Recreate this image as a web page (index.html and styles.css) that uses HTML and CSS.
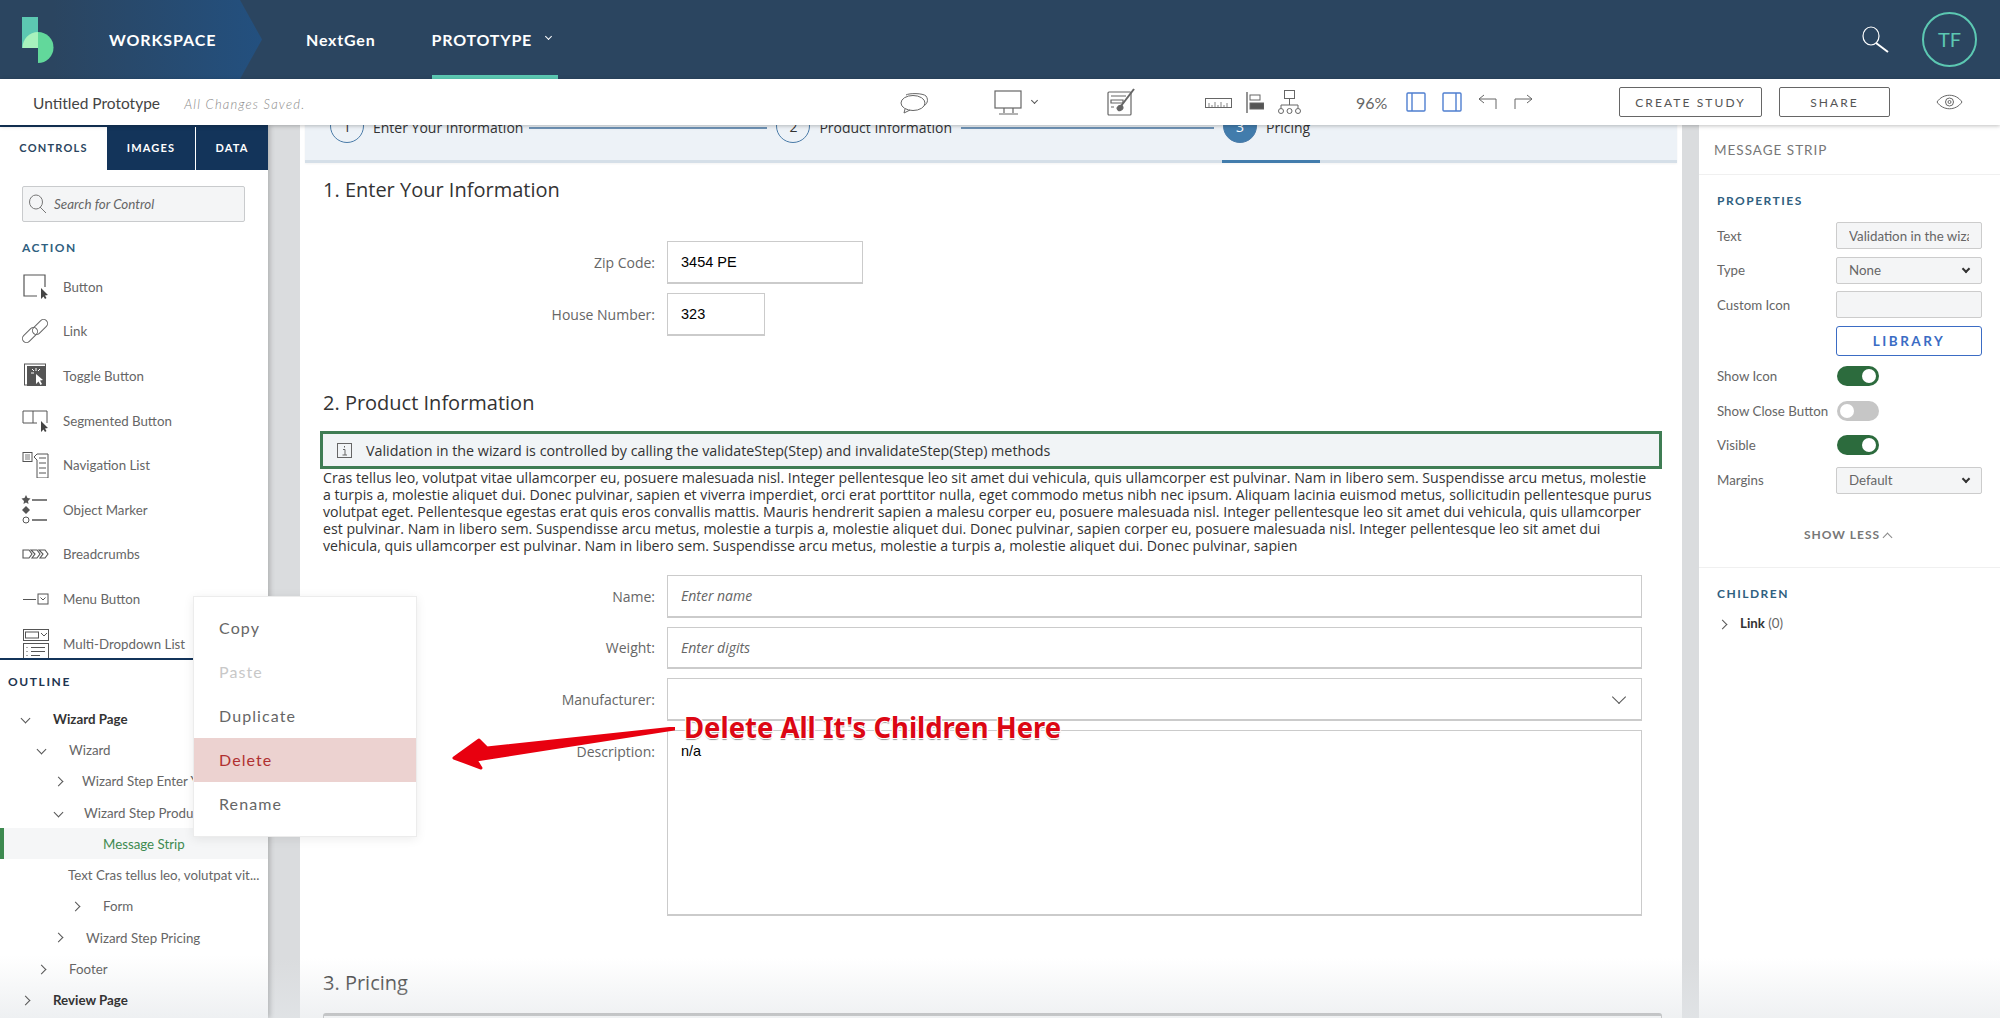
FILE: index.html
```html
<!DOCTYPE html>
<html lang="en">
<head>
    <meta charset="UTF-8">
    <meta name="viewport" content="width=device-width, initial-scale=1.0">
    <title>Untitled Prototype</title>
    <link rel="stylesheet" href="styles.css">
</head>
<body>
    <header class="topbar">
        <div class="brand">
            <svg class="logo" width="32" height="46" viewBox="0 0 32 46">
                <rect x="0" y="0" width="16" height="31" fill="#5cc8b2"/>
                <path d="M16 15 A15.5 15.5 0 0 1 16 46 Z" fill="#62d89b"/>
                <path d="M16 15 A15.5 15.5 0 0 0 0.500 31 H16 Z" fill="#a8f2bd"/>
            </svg>
            <span class="brand-name">WORKSPACE</span>
        </div>
        <nav class="topnav">
            <a class="topnav-link">NextGen</a>
            <a class="topnav-link active">PROTOTYPE <i class="chev chev-down light"></i></a>
        </nav>
        <div class="top-right">
            <svg width="27" height="27" viewBox="0 0 27 27" fill="none" stroke="#fff">
                <ellipse cx="9" cy="10" rx="8" ry="9" stroke-width="1.2"/>
                <path d="M14 17 L26 26" stroke-width="2"/>
            </svg>
            <div class="avatar">TF</div>
        </div>
    </header>

    <div class="toolbar">
        <div class="doc">
            <span class="doc-title">Untitled Prototype</span>
            <span class="doc-status">All Changes Saved.</span>
        </div>
        <svg class="tool tool-comment" width="28" height="21" viewBox="0 0 28 21" fill="none" stroke="#666">
            <path d="M6 2 C9 0 23 0 26 3 C29 7 27 12 23 13"/>
            <ellipse cx="13" cy="10" rx="12" ry="7.5" fill="#fff"/>
            <path d="M5 16 L4 20 L10 17"/>
        </svg>
        <svg class="tool" width="29" height="25" viewBox="0 0 29 25" fill="none" stroke="#666" stroke-width="1.2">
            <rect x="1" y="1" width="26" height="17"/>
            <path d="M10 18 V23 M19 18 V23 M5 24 H24"/>
        </svg>
        <i class="chev chev-down small tool-monitor-chev"></i>
        <svg class="tool tool-brush" width="28" height="28" viewBox="0 0 28 28" fill="none" stroke="#666" stroke-width="1.2">
            <rect x="1" y="4" width="23" height="23" rx="1"/>
            <path d="M4 8 H19 M4 12 H16 V15 H4 Z M4 19 H7"/>
            <path d="M27 1 L14 18" stroke-width="2"/>
            <path d="M10 20 C12 16 16 17 16 20 C15 23 11 24 10 20 Z" fill="#666"/>
        </svg>
        <svg class="tool tool-ruler" width="27" height="10" viewBox="0 0 27 10" fill="none" stroke="#666">
            <rect x="0.5" y="0.5" width="26" height="9"/>
            <path d="M4 9 V5 M7 9 V7 M10 9 V4 M13 9 V7 M16 9 V4 M19 9 V7 M22 9 V5" stroke-width="0.8"/>
        </svg>
        <svg class="tool tool-align" width="18" height="21" viewBox="0 0 18 21" fill="none" stroke="#666">
            <path d="M1 0 V21" stroke-width="1.4"/>
            <rect x="4" y="3" width="10" height="5"/>
            <rect x="4" y="11" width="14" height="6" fill="#555"/>
        </svg>
        <svg class="tool tool-tree" width="23" height="24" viewBox="0 0 23 24" fill="none" stroke="#666">
            <rect x="6.5" y="0.5" width="10" height="8"/>
            <path d="M11.5 9 V15 M3 18 V15 H20 V18"/>
            <circle cx="3" cy="21" r="2.5"/><circle cx="11.5" cy="21" r="2.5"/><circle cx="20" cy="21" r="2.5"/>
        </svg>
        <span class="zoom-level">96%</span>
        <svg class="tool tool-panel" width="20" height="20" viewBox="0 0 20 20" fill="none" stroke="#4f7fd0" stroke-width="1.4">
            <rect x="1" y="1" width="18" height="18" rx="1"/><path d="M6 1 V19"/>
        </svg>
        <svg class="tool tool-panel" width="20" height="20" viewBox="0 0 20 20" fill="none" stroke="#4f7fd0" stroke-width="1.4">
            <rect x="1" y="1" width="18" height="18" rx="1"/><path d="M14 1 V19"/>
        </svg>
        <svg class="tool tool-undo" width="19" height="16" viewBox="0 0 19 16" fill="none" stroke="#666">
            <path d="M18 15 V5 H1 M6 1 L1 5 L6 9"/>
        </svg>
        <svg class="tool tool-redo" width="19" height="16" viewBox="0 0 19 16" fill="none" stroke="#666">
            <path d="M1 15 V5 H18 M13 1 L18 5 L13 9"/>
        </svg>
        <a class="btn btn-study">CREATE STUDY</a>
        <a class="btn btn-share">SHARE</a>
        <svg class="tool tool-eye" width="27" height="16" viewBox="0 0 27 16" fill="none" stroke="#666">
            <path d="M1 8 C7 -1 20 -1 26 8 C20 17 7 17 1 8 Z"/>
            <circle cx="13.5" cy="8" r="4"/><circle cx="13.5" cy="8" r="1.5"/>
        </svg>
    </div>

    <div class="workspace">
        <aside class="left-panel">
            <section class="controls">
                <div class="tabs">
                    <a class="tab tab-controls active">CONTROLS</a>
                    <a class="tab tab-images">IMAGES</a>
                    <a class="tab tab-data">DATA</a>
                </div>
                <div class="search">
                    <svg width="18" height="20" viewBox="0 0 18 20" fill="none" stroke="#777">
                        <ellipse cx="8" cy="8" rx="6.5" ry="7"/><path d="M12 13 L18 19"/>
                    </svg>
                    <span>Search for Control</span>
                </div>
                <h3 class="group-title">ACTION</h3>
                <ul class="control-list">
                    <li>
                        <svg width="30" height="26" viewBox="0 0 30 26" fill="none" stroke="#555" stroke-width="1.2">
                            <path d="M17 22 H4 V1 H25 V13"/>
                            <path d="M21 14 L21 25 L23.5 22.5 L25 25 L26.5 24 L25 21.5 L28 21 Z" fill="#444" stroke="none"/>
                        </svg>
                        <span>Button</span>
                    </li>
                    <li>
                        <svg width="30" height="26" viewBox="0 0 30 26" fill="none" stroke="#666">
                            <rect x="1" y="13" width="18" height="8" rx="4" transform="rotate(-45 10 17)"/>
                            <rect x="11" y="5" width="18" height="8" rx="4" transform="rotate(-45 20 9)"/>
                        </svg>
                        <span>Link</span>
                    </li>
                    <li>
                        <svg width="30" height="26" viewBox="0 0 30 26" fill="none" stroke="#555">
                            <rect x="4.5" y="1" width="21" height="21"/>
                            <rect x="7" y="3" width="19" height="20" fill="#555" stroke="none"/>
                            <path d="M16 11 V21 L18.5 18.5 L20.5 22 L22 21 L20 17.500 L23 17 Z" fill="#fff" stroke="none"/>
                            <path d="M16 5 V8 M11 10 H14 M12 6 L14 8 M20 6 L18 8" stroke="#fff"/>
                        </svg>
                        <span>Toggle Button</span>
                    </li>
                    <li>
                        <svg width="30" height="26" viewBox="0 0 30 26" fill="none" stroke="#555">
                            <path d="M17 15 H3 V3 H27 V15 M13 3 V15"/>
                            <path d="M21 13 V24 L23.500 21.500 L25 24 L26.500 23 L25 20.500 L28 20 Z" fill="#444" stroke="none"/>
                        </svg>
                        <span>Segmented Button</span>
                    </li>
                    <li>
                        <svg width="30" height="26" viewBox="0 0 30 26" fill="none" stroke="#555">
                            <rect x="3" y="0.5" width="9" height="9"/>
                            <path d="M5 3 H10 M5 5 H10 M5 7 H10" stroke-width="0.8"/>
                            <path d="M14 5 L17 2 H28 V26 H17 V8 Z"/>
                            <path d="M19 6 H26 M19 11 H26 M19 16 H26 M19 21 H26"/>
                        </svg>
                        <span>Navigation List</span>
                    </li>
                    <li>
                        <svg width="30" height="30" viewBox="0 0 30 30" fill="none" stroke="#555">
                            <path d="M6 0 L7.500 3 L10.500 3.500 L8 6 L8.500 9 L6 7.500 L3.500 9 L4 6 L1.500 3.500 L4.500 3 Z" fill="#555" stroke="none"/>
                            <path d="M6 11 L10 15 L6 19 L2 15 Z" fill="#555" stroke="none"/>
                            <circle cx="6" cy="25" r="3"/>
                            <path d="M12 5 H27 M12 25 H27" stroke-width="1.4"/>
                        </svg>
                        <span>Object Marker</span>
                    </li>
                    <li>
                        <svg width="30" height="26" viewBox="0 0 30 26" fill="none" stroke="#555">
                            <path d="M3 9 H9 L12 13 L9 17 H3 Z M11 9 H17 L20 13 L17 17 H12 L15 13 Z M19 9 H25 L28 13 L25 17 H20 L23 13 Z" stroke-width="1.1"/>
                        </svg>
                        <span>Breadcrumbs</span>
                    </li>
                    <li>
                        <svg width="30" height="26" viewBox="0 0 30 26" fill="none" stroke="#555">
                            <path d="M3 13.500 H16"/>
                            <rect x="18" y="8" width="10" height="10"/>
                            <path d="M20.500 11.500 L23 14 L25.500 11.500"/>
                        </svg>
                        <span>Menu Button</span>
                    </li>
                    <li>
                        <svg width="30" height="30" viewBox="0 0 30 30" fill="none" stroke="#555">
                            <rect x="3.500" y="0.500" width="25" height="11"/>
                            <rect x="5.500" y="3" width="13" height="6"/>
                            <path d="M21 4 L24 7 L27 4"/>
                            <rect x="3.500" y="14.500" width="25" height="15"/>
                            <path d="M7 18 V19 M7 22 V23 M7 26 V27 M11 18.500 H25 M11 22.500 H25 M11 26.500 H20"/>
                        </svg>
                        <span>Multi-Dropdown List</span>
                    </li>
                </ul>
            </section>
            <section class="outline">
                <h3 class="outline-title">OUTLINE</h3>
                <div class="tree-row lv1 strong"><i class="chev chev-down"></i><span>Wizard Page</span></div>
                <div class="tree-row lv2"><i class="chev chev-down"></i><span>Wizard</span></div>
                <div class="tree-row lv3 pull-5"><i class="chev chev-right"></i><span>Wizard Step Enter Your Information</span></div>
                <div class="tree-row lv3 pull-3"><i class="chev chev-down"></i><span>Wizard Step Product Information</span></div>
                <div class="tree-row selected"><span>Message Strip</span></div>
                <div class="tree-row text-row"><span>Text Cras tellus leo, volutpat vit...</span></div>
                <div class="tree-row lv4"><i class="chev chev-right"></i><span>Form</span></div>
                <div class="tree-row lv3 pull-1"><i class="chev chev-right"></i><span>Wizard Step Pricing</span></div>
                <div class="tree-row lv2"><i class="chev chev-right"></i><span>Footer</span></div>
                <div class="tree-row lv1 strong"><i class="chev chev-right"></i><span>Review Page</span></div>
            </section>
        </aside>

        <main class="canvas">
            <div class="page">
                <div class="stepper">
                    <div class="step step-1"><b class="step-num">1</b><span>Enter Your Information</span></div>
                    <div class="step-line line-1"></div>
                    <div class="step step-2"><b class="step-num">2</b><span>Product Information</span></div>
                    <div class="step-line line-2"></div>
                    <div class="step step-3 current"><b class="step-num">3</b><span>Pricing</span></div>
                </div>

                <h2 class="section-title first">1. Enter Your Information</h2>
                <div class="form">
                    <label>Zip Code:</label><div class="field field-zip filled">3454 PE</div>
                    <label>House Number:</label><div class="field field-house filled">323</div>
                </div>

                <h2 class="section-title">2. Product Information</h2>
                <div class="message-strip">
                    <svg width="15" height="15" viewBox="0 0 15 15" fill="none" stroke="#666">
                        <rect x="0.500" y="0.500" width="14" height="14"/>
                        <path d="M6 6.500 H8 V12 M5.500 12 H10 M7.500 3 V4.500"/>
                    </svg>
                    <span>Validation in the wizard is controlled by calling the validateStep(Step) and invalidateStep(Step) methods</span>
                </div>
                <p class="lorem">Cras tellus leo, volutpat vitae ullamcorper eu, posuere malesuada nisl. Integer pellentesque leo sit amet dui vehicula, quis ullamcorper est pulvinar. Nam in libero sem. Suspendisse arcu metus, molestie<br>a turpis a, molestie aliquet dui. Donec pulvinar, sapien et viverra imperdiet, orci erat porttitor nulla, eget commodo metus nibh nec ipsum. Aliquam lacinia euismod metus, sollicitudin pellentesque purus<br>volutpat eget. Pellentesque egestas erat quis eros convallis mattis. Mauris hendrerit sapien a malesu corper eu, posuere malesuada nisl. Integer pellentesque leo sit amet dui vehicula, quis ullamcorper<br>est pulvinar. Nam in libero sem. Suspendisse arcu metus, molestie a turpis a, molestie aliquet dui. Donec pulvinar, sapien corper eu, posuere malesuada nisl. Integer pellentesque leo sit amet dui<br>vehicula, quis ullamcorper est pulvinar. Nam in libero sem. Suspendisse arcu metus, molestie a turpis a, molestie aliquet dui. Donec pulvinar, sapien</p>

                <div class="form form-product">
                    <label>Name:</label><div class="field field-wide placeholder">Enter name</div>
                    <label>Weight:</label><div class="field field-wide placeholder">Enter digits</div>
                    <label>Manufacturer:</label><div class="field field-wide select"><i class="chev chev-down big"></i></div>
                    <label class="label-top">Description:</label><div class="field field-wide textarea">n/a</div>
                </div>

                <h2 class="section-title last">3. Pricing</h2>
                <div class="pricing-box"></div>
            </div>
        </main>

        <aside class="right-panel">
            <div class="panel-head">MESSAGE STRIP</div>
            <section class="props">
                <h3 class="group-title">PROPERTIES</h3>
                <div class="prop-row"><span>Text</span><div class="prop-input clip"><em>Validation in the wizard is controlled</em></div></div>
                <div class="prop-row"><span>Type</span><div class="prop-input">None<i class="chev chev-down dark"></i></div></div>
                <div class="prop-row"><span>Custom Icon</span><div class="prop-input"></div></div>
                <div class="prop-row library-row"><span></span><a class="library">LIBRARY</a></div>
                <div class="prop-row switch-row"><span>Show Icon</span><i class="switch on"></i></div>
                <div class="prop-row switch-row"><span>Show Close Button</span><i class="switch"></i></div>
                <div class="prop-row switch-row"><span>Visible</span><i class="switch on"></i></div>
                <div class="prop-row"><span>Margins</span><div class="prop-input">Default<i class="chev chev-down dark"></i></div></div>
                <div class="show-less">SHOW LESS <i class="chev chev-up"></i></div>
            </section>
            <section class="children">
                <h3 class="group-title">CHILDREN</h3>
                <div class="child-row"><i class="chev chev-right"></i><b>Link</b>&nbsp;(0)</div>
            </section>
        </aside>
    </div>

    <!-- things lying over the app -->
    <ul class="context-menu">
        <li>Copy</li>
        <li class="disabled">Paste</li>
        <li>Duplicate</li>
        <li class="danger">Delete</li>
        <li class="rename">Rename</li>
    </ul>
    <svg class="callout-arrow" width="225" height="46" viewBox="0 0 225 46">
        <path d="M224 1 L37 21 L29 13 L4 31 L31 41 L26 33 L224 2 Z" fill="#e8000f" stroke="#e8000f" stroke-width="3" stroke-linejoin="round"/>
    </svg>
    <div class="callout-text">Delete All It's Children Here</div>
    <div class="bottom-fade"></div>
</body>
</html>
```
FILE: styles.css
```css
* {
    box-sizing: border-box;
}
html, body {
    margin: 0;
    height: 1018px;
    overflow: hidden;
}
body {
    position: relative;
    font-family: Lato, "Open Sans", sans-serif;
    color: #666;
    background-color: #fff;
}
h2, h3, p, ul {
    margin: 0;
    padding: 0;
}
ul {
    list-style: none;
}

/* chevrons */
.chev {
    display: inline-block;
    width: 7px;
    height: 7px;
    border-right: 1px solid #555;
    border-bottom: 1px solid #555;
}
.chev-down {
    transform: rotate(45deg);
}
.chev-right {
    transform: rotate(-45deg);
}
.chev-up {
    transform: translateY(2px) rotate(225deg);
    border-color: #888;
}
.chev.light {
    width: 5px;
    height: 5px;
    border-color: #fff;
    margin-left: 14px;
    position: relative;
    top: -3px;
}
.chev.small {
    width: 5px;
    height: 5px;
}
.chev.big {
    width: 10px;
    height: 10px;
}
.chev.dark {
    width: 6px;
    height: 6px;
    border-right-width: 2px;
    border-bottom-width: 2px;
    border-color: #333;
}

/* top bar */
.topbar {
    display: flex;
    height: 79px;
    background-color: #2b4560;
    color: #fff;
}
.brand {
    display: flex;
    align-items: center;
    width: 262px;
    height: 79px;
    padding-left: 22px;
    background: linear-gradient(90deg, #2b4560 20%, #23507f 100%);
    clip-path: polygon(0 0, 240px 0, 262px 50%, 240px 100%, 0 100%);
}
.logo {
    flex-shrink: 0;
    margin-top: 1px;
}
.brand-name {
    margin-left: 55px;
    font-size: 16px;
    font-weight: 700;
    letter-spacing: 0.9px;
}
.topnav {
    display: flex;
    margin-left: 44px;
}
.topnav-link {
    display: flex;
    align-items: center;
    height: 79px;
    font-size: 16px;
    font-weight: 700;
    letter-spacing: 0.8px;
    border-bottom: 4px solid transparent;
    padding-top: 4px;
}
.topnav-link.active {
    width: 126px;
    margin-left: 56px;
    border-bottom-color: #5cc8b2;
}
.top-right {
    display: flex;
    align-items: center;
    gap: 33px;
    margin-left: auto;
    padding-right: 23px;
}
.avatar {
    width: 55px;
    height: 55px;
    border: 2px solid #5cc8b2;
    border-radius: 50%;
    color: #5cc8b2;
    font-size: 20px;
    line-height: 51px;
    text-align: center;
}

/* tool bar */
.toolbar {
    position: relative;
    z-index: 5;
    display: flex;
    align-items: center;
    height: 46px;
    background-color: #fff;
    box-shadow: 0 1px 4px rgba(0, 0, 0, 0.25);
}
.doc {
    width: 900px;
    padding-left: 33px;
}
.doc-title {
    font-size: 15.5px;
    color: #444;
}
.doc-status {
    margin-left: 20px;
    font-size: 13px;
    font-style: italic;
    font-weight: 300;
    letter-spacing: 1.2px;
    color: #888;
}
.tool {
    flex-shrink: 0;
}
.tool-comment {
    margin-right: 66px;
    margin-top: 3px;
}
.tool-monitor-chev {
    margin-left: 9px;
    margin-top: -3px;
}
.tool-brush {
    margin-left: 70px;
}
.tool-ruler {
    margin-left: 70px;
    margin-top: 1px;
}
.tool-align {
    margin-left: 14px;
}
.tool-tree {
    margin-left: 14px;
}
.zoom-level {
    margin-left: 55px;
    width: 50px;
    font-size: 16px;
    color: #666;
}
.tool-panel {
    margin-right: 16px;
}
.tool-undo {
    margin-right: 17px;
}
.btn {
    display: flex;
    align-items: center;
    justify-content: center;
    height: 30px;
    border: 1px solid #666;
    border-radius: 2px;
    font-size: 12px;
    font-weight: 400;
    letter-spacing: 2.1px;
    color: #555;
}
.btn-study {
    width: 143px;
    margin-left: 86px;
}
.btn-share {
    width: 111px;
    margin-left: 17px;
}
.tool-eye {
    margin-left: 46px;
}

/* main area */
.workspace {
    display: flex;
    height: 893px;
}
.left-panel {
    position: relative;
    z-index: 2;
    display: flex;
    flex-direction: column;
    width: 268px;
    flex-shrink: 0;
    background: linear-gradient(180deg, #fff 93%, #eef0f2 100%);
    box-shadow: 2px 0 5px rgba(0, 0, 0, 0.2);
}

/* controls */
.controls {
    height: 535px;
    overflow: hidden;
    background-color: #fff;
    border-top: 2px solid #13345a;
    border-bottom: 2px solid #13345a;
}
.tabs {
    display: flex;
    height: 43px;
}
.tab {
    display: flex;
    align-items: center;
    justify-content: center;
    padding-bottom: 3px;
    font-size: 11px;
    font-weight: 700;
    letter-spacing: 1.2px;
    background-color: #13345a;
    color: #fff;
}
.tab.active {
    background-color: #fff;
    color: #2b4560;
}
.tab-controls {
    width: 107px;
}
.tab-images {
    width: 89px;
    border-right: 1px solid #fff;
}
.tab-data {
    width: 72px;
}
.search {
    display: flex;
    align-items: center;
    gap: 8px;
    width: 223px;
    height: 36px;
    margin: 16px 0 0 22px;
    padding-left: 5px;
    background-color: #f4f5f6;
    border: 1px solid #c9cbcd;
    border-radius: 2px;
    font-size: 13.4px;
    font-style: italic;
    color: #666;
}
.group-title {
    font-size: 12px;
    font-weight: 700;
    letter-spacing: 1.5px;
    color: #2f6080;
}
.controls .group-title {
    margin: 19px 0 0 22px;
    line-height: 14px;
}
.control-list {
    margin-top: 9.5px;
}
.control-list li {
    display: flex;
    align-items: center;
    height: 44.6px;
    padding-left: 20px;
    font-size: 13.3px;
    color: #666;
}
.control-list svg {
    flex-shrink: 0;
    margin-right: 13px;
}

/* outline */
.outline-title {
    margin: 14px 0 13px 8px;
    font-size: 12px;
    line-height: 16px;
    letter-spacing: 1.6px;
    font-weight: 700;
    color: #1e3550;
}
.tree-row {
    display: flex;
    align-items: center;
    height: 31.3px;
    font-size: 13.3px;
    white-space: nowrap;
    overflow: hidden;
}
.tree-row .chev {
    flex-shrink: 0;
    margin-right: 24px;
}
.tree-row.strong {
    font-weight: 700;
    color: #333;
}
.lv1 {
    padding-left: 22px;
}
.lv2 {
    padding-left: 38px;
}
.lv3 {
    padding-left: 55px;
}
.lv4 {
    padding-left: 72px;
}
.lv3.pull-5 .chev {
    margin-right: 20px;
}
.lv3.pull-3 .chev {
    margin-right: 22px;
}
.lv3.pull-1 .chev {
    margin-right: 24px;
}
.tree-row.selected {
    padding-left: 99px;
    background-color: #f5f6f7;
    border-left: 4px solid #3d8a50;
    color: #3d8a50;
}
.text-row {
    padding-left: 68px;
}

/* canvas */
.canvas {
    flex: 1;
    padding: 0 17px 0 32px;
    background-color: #dadcde;
    overflow: hidden;
}
.page {
    display: flow-root;
    height: 100%;
    padding: 0 20px 0 23px;
    background-color: #fff;
    font-family: "Open Sans", sans-serif;
    font-size: 14px;
    color: #333;
}
.stepper {
    position: relative;
    display: flex;
    align-items: flex-start;
    height: 58px;
    margin: -20px -15px 0 -18px;
    background-color: #edf2f7;
    border-bottom: 3px solid #d5dfe8;
    box-shadow: 0 1px 2px rgba(0, 0, 0, 0.05);
}
.step {
    display: flex;
    align-items: center;
    gap: 9px;
    height: 34px;
    margin-top: 4px;
    color: #333;
}
.step span {
    position: relative;
    top: 1px;
}
.step-1 {
    margin-left: 25px;
}
.step-2 {
    margin-left: 9px;
}
.step-3 {
    margin-left: 9px;
}
.step-num {
    display: flex;
    align-items: center;
    justify-content: center;
    width: 34px;
    height: 34px;
    border: 1px solid #4a7ba8;
    border-radius: 50%;
    background-color: #edf2f7;
    font-weight: 400;
}
.current .step-num {
    background-color: #427cac;
    color: #fff;
}
.current::after {
    content: "";
    position: absolute;
    left: 917px;
    bottom: -3px;
    width: 98px;
    height: 3px;
    background-color: #427cac;
}
.step-line {
    height: 2px;
    margin: 22px 0 0 9px;
    background-color: #6f93b5;
}
.line-1 {
    width: 238px;
    margin-left: 6px;
}
.line-2 {
    width: 253px;
}
.section-title {
    margin-top: 52px;
    font-size: 20px;
    font-weight: 400;
    line-height: 30px;
    color: #333;
}
.section-title.first {
    margin-top: 12px;
}
.section-title.last {
    margin-top: 52px;
}
.form {
    display: grid;
    grid-template-columns: 332px 1fr;
    column-gap: 12px;
    row-gap: 9px;
    align-items: center;
    margin-top: 36px;
}
.form label {
    text-align: right;
    color: #666;
}
.field {
    display: flex;
    align-items: center;
    height: 43px;
    padding-left: 13px;
    border: 1px solid #cbcbcb;
    border-bottom-width: 2px;
    color: #000;
    background-color: #fff;
}
.filled, .textarea {
    font-family: "Liberation Sans", Arial, sans-serif;
    font-size: 14.5px;
}
.field-zip {
    width: 196px;
}
.field-house {
    width: 98px;
}
.form-product {
    margin-top: 21px;
}
.field-wide {
    width: 975px;
    height: 42.5px;
}
.placeholder {
    font-style: italic;
    color: #666;
}
.select {
    justify-content: flex-end;
    padding-right: 17px;
}
.select .chev {
    margin-top: -4px;
}
.textarea {
    align-items: flex-start;
    height: 186px;
    padding-top: 12px;
}
.label-top {
    align-self: start;
    margin-top: 12px;
}
.message-strip {
    display: flex;
    align-items: center;
    gap: 14px;
    height: 38px;
    margin: 13px 0 0 -3px;
    padding-left: 14px;
    background-color: #f1f4f6;
    border: 3px solid #3f7d54;
    font-size: 14.3px;
}
.lorem {
    font-size: 14.17px;
    line-height: 17px;
    white-space: nowrap;
}
.pricing-box {
    height: 60px;
    margin-top: 15px;
    border: 1px solid #999;
    border-top-width: 3px;
    border-radius: 3px 3px 0 0;
}

/* right panel */
.right-panel {
    width: 301px;
    flex-shrink: 0;
    background-color: #fff;
}
.panel-head {
    height: 50px;
    padding: 17px 0 0 15px;
    border-bottom: 1px solid #f0f0f0;
    font-size: 13.5px;
    line-height: 16px;
    letter-spacing: 1px;
    color: #777;
}
.props {
    height: 393px;
    padding: 18px 18px 0 18px;
    border-bottom: 1px solid #f0f0f0;
}
.props .group-title {
    line-height: 16px;
    margin-bottom: 13px;
}
.prop-row {
    display: flex;
    align-items: center;
    height: 27px;
    margin-bottom: 7.6px;
    font-size: 13.3px;
    color: #666;
}
.prop-row > span {
    width: 119px;
    flex-shrink: 0;
    white-space: nowrap;
}
.prop-input {
    display: flex;
    align-items: center;
    justify-content: space-between;
    width: 146px;
    height: 27px;
    padding: 0 12px;
    background-color: #f4f5f6;
    border: 1px solid #ccc;
    border-radius: 2px;
    white-space: nowrap;
    overflow: hidden;
}
.prop-input .chev {
    margin: -3px 0 0 0;
}
.prop-input.clip em {
    display: block;
    font-style: normal;
    overflow: hidden;
}
.library-row {
    height: 30px;
    margin-bottom: 7px;
}
.library {
    display: flex;
    align-items: center;
    justify-content: center;
    width: 146px;
    height: 30px;
    border: 1px solid #3b6cc4;
    border-radius: 3px;
    font-size: 13.5px;
    font-weight: 700;
    letter-spacing: 2.5px;
    color: #3b6cc4;
}
.switch {
    position: relative;
    display: block;
    width: 42px;
    height: 20px;
    margin-left: 1px;
    border-radius: 10px;
    background-color: #c6c6c6;
}
.switch::after {
    content: "";
    position: absolute;
    top: 3px;
    left: 3px;
    width: 14px;
    height: 14px;
    border-radius: 50%;
    background-color: #fff;
}
.switch.on {
    background-color: #2c6b3d;
}
.switch.on::after {
    left: 25px;
}
.show-less {
    margin-top: 33px;
    padding-left: 87px;
    font-size: 12px;
    font-weight: 700;
    letter-spacing: 1px;
    color: #777;
}
.children {
    padding: 18px 18px 0 18px;
}
.children .group-title {
    line-height: 16px;
}
.child-row {
    margin-top: 13px;
    padding-left: 2px;
    font-size: 13.3px;
    color: #666;
}
.child-row .chev {
    margin-right: 14px;
}
.child-row b {
    color: #333;
}

/* context menu */
.context-menu {
    position: absolute;
    z-index: 10;
    left: 193px;
    top: 596px;
    width: 224px;
    height: 241px;
    padding-top: 9px;
    background-color: #fff;
    border: 1px solid #ececec;
    box-shadow: 0 2px 10px rgba(0, 0, 0, 0.08);
    font-size: 16px;
    letter-spacing: 1.1px;
    color: #666;
}
.context-menu li {
    height: 44px;
    padding-left: 25px;
    line-height: 44px;
}
.context-menu .disabled {
    color: #c8c8c8;
}
.context-menu .danger {
    background-color: #ecd2d0;
    color: #b03030;
}

/* annotation */
.callout-arrow {
    position: absolute;
    z-index: 11;
    left: 450px;
    top: 727px;
}
.callout-text {
    position: absolute;
    z-index: 11;
    left: 684px;
    top: 707px;
    font-family: "Noto Sans", sans-serif;
    font-size: 28px;
    font-weight: 700;
    line-height: 40px;
    white-space: nowrap;
    color: #dc0714;
    transform: scaleX(0.98);
    transform-origin: left center;
    text-shadow: 1px 1px 0 #fff, -1px -1px 0 #fff, 1px -1px 0 #fff, -1px 1px 0 #fff, 0 2px 1px #999;
}
.bottom-fade {
    position: absolute;
    z-index: 1;
    left: 268px;
    right: 0;
    bottom: 0;
    height: 60px;
    background: linear-gradient(180deg, rgba(228, 231, 234, 0), rgba(228, 231, 234, 0.6));
    pointer-events: none;
}
```
